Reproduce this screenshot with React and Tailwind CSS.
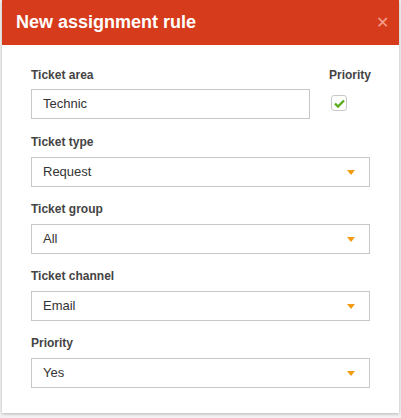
import React from 'react';

const Caret = () => (
  <svg width="8" height="5" viewBox="0 0 8 5" className="shrink-0">
    <path d="M0 0h8L4 5z" fill="#f39c12" />
  </svg>
);

const SelectField = ({ label, value }) => (
  <div className="flex flex-col">
    <label className="text-[12px] font-bold text-[#444] leading-[16px]">{label}</label>
    <div className="mt-[7px] h-[30px] border border-[#c8c8c8] bg-white flex items-center justify-between pl-[11px] pr-[14px]">
      <span className="text-[13px] text-[#333]">{value}</span>
      <Caret />
    </div>
  </div>
);

export default function App() {
  return (
    <div className="w-[401px] h-[418px] bg-[#f2f2f2] pl-[2px] pr-[2px]" style={{ fontFamily: '"Liberation Sans", Arial, sans-serif' }}>
      <div className="w-[397px] h-[413px] bg-white shadow-[0_1px_3px_rgba(0,0,0,0.25)] flex flex-col">
        <div className="h-[45px] bg-[#d63c1c] flex items-center justify-between pl-[14px] pr-[10px]">
          <h2 className="text-[18px] font-bold text-white">New assignment rule</h2>
          <span className="text-[#f2a08c] text-[16px] leading-none">✕</span>
        </div>
        <div className="flex flex-col gap-[14px] px-[29px] pt-[22px]">
          <div className="flex gap-[19px] mb-[1px]">
            <div className="flex flex-col flex-1">
              <label className="text-[12px] font-bold text-[#444] leading-[16px]">Ticket area</label>
              <div className="mt-[6px] h-[30px] border border-[#c8c8c8] bg-white flex items-center pl-[11px]">
                <span className="text-[13px] text-[#333]">Technic</span>
              </div>
            </div>
            <div className="flex flex-col w-[41px]">
              <label className="text-[12px] font-bold text-[#444] leading-[16px]">Priority</label>
              <div className="mt-[12px] ml-[2px] w-[16px] h-[16px] border border-[#c8c8c8] rounded-[3px] bg-white flex items-center justify-center">
                <svg width="11" height="9" viewBox="0 0 11 9">
                  <path d="M1 4.5l3 3L10 1.5" stroke="#5aac1e" strokeWidth="2.4" fill="none" />
                </svg>
              </div>
            </div>
          </div>
          <SelectField label="Ticket type" value="Request" />
          <SelectField label="Ticket group" value="All" />
          <SelectField label="Ticket channel" value="Email" />
          <SelectField label="Priority" value="Yes" />
        </div>
      </div>
    </div>
  );
}
